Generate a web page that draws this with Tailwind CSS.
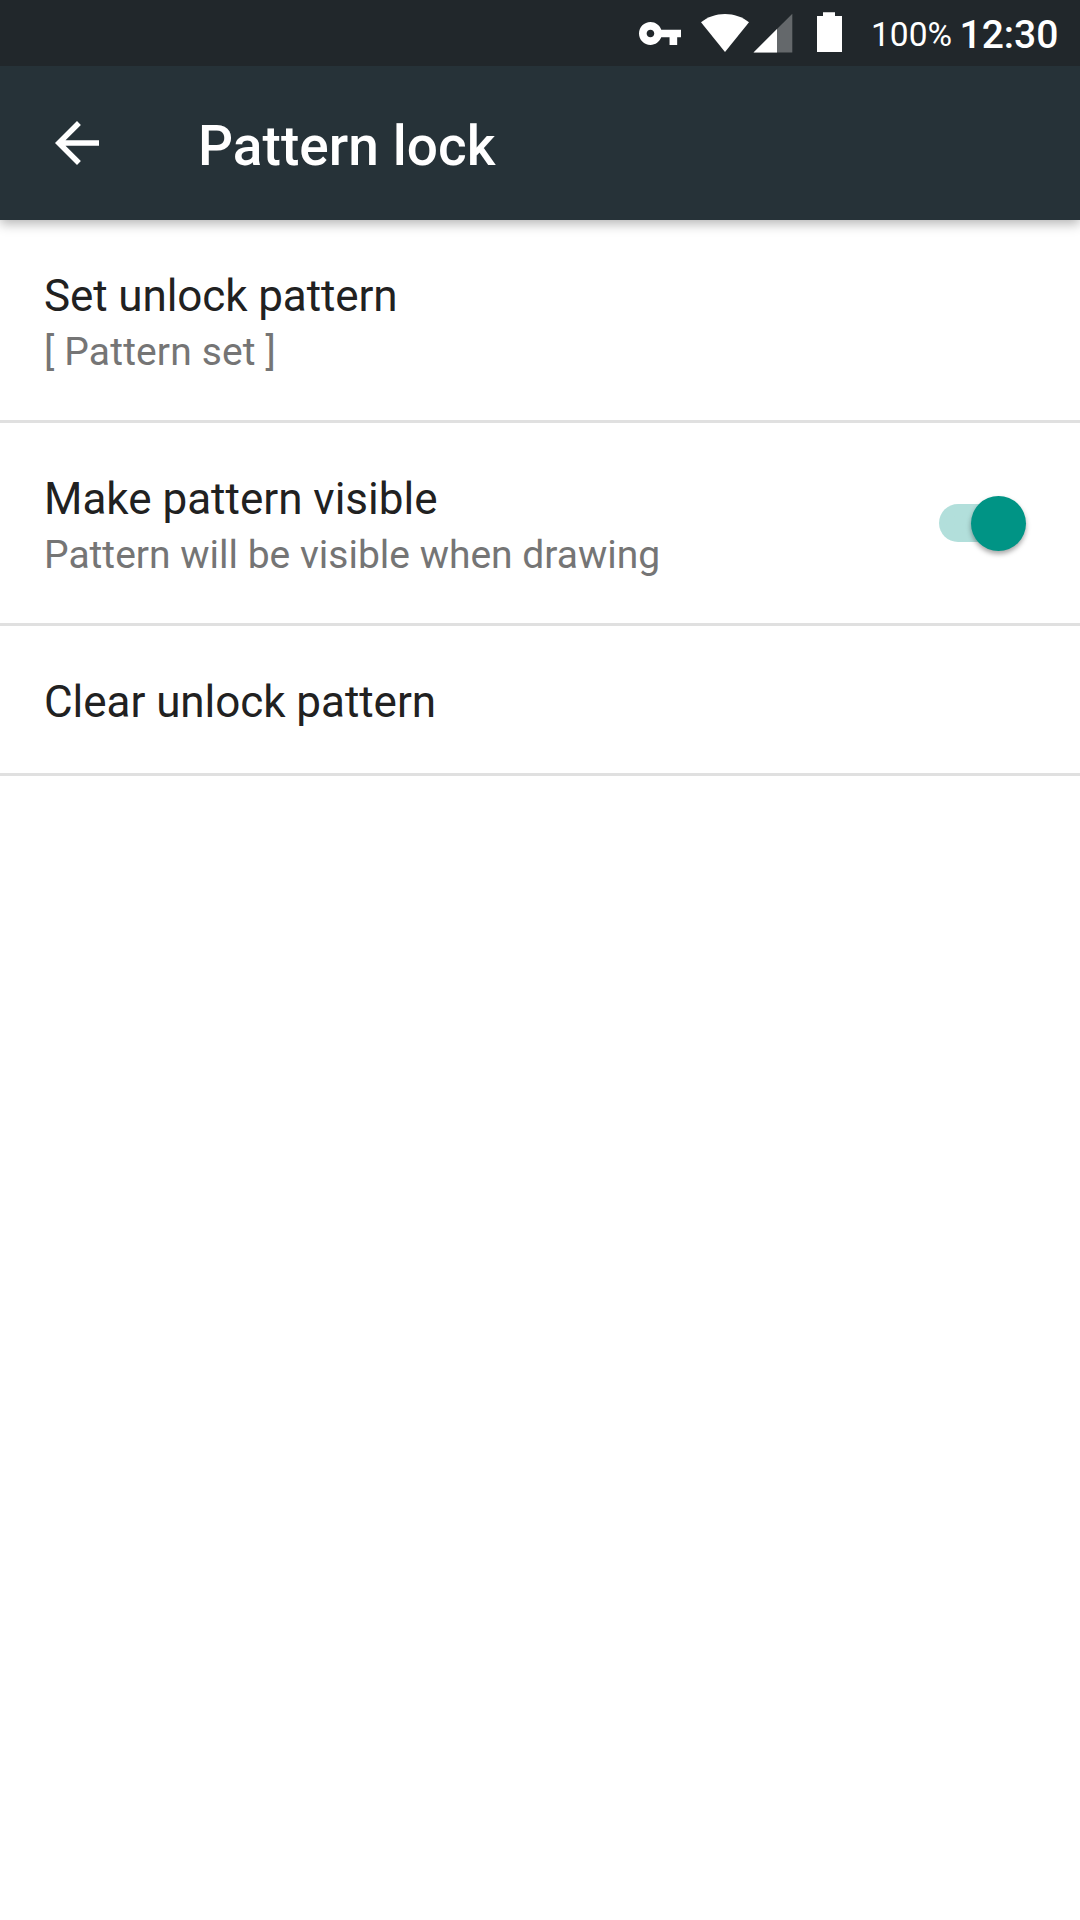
<!DOCTYPE html>
<html lang="en"><head><meta charset="utf-8"><title>Pattern lock</title>
<script src="https://cdn.jsdelivr.net/npm/@tailwindcss/browser@4"></script></head>
<body class="h-[1920px] w-[1080px] overflow-hidden bg-white font-['Roboto',sans-serif] text-[#212121]">
<header class="relative h-[220px] bg-[#263238] text-white shadow-[0_4px_11px_rgba(0,0,0,0.29)]">
<div class="flex h-[66px] items-start bg-[#21272b] pl-[639px]">
<svg class="mt-[21.5px] h-[23px] w-[42px] shrink-0" viewBox="1 6 22 12" fill="currentColor"><path d="M12.65 10C11.83 7.67 9.61 6 7 6c-3.31 0-6 2.69-6 6s2.69 6 6 6c2.61 0 4.83-1.67 5.65-4H17v4h4v-4h2v-4H12.65zM7 14c-1.1 0-2-.9-2-2s.9-2 2-2 2 .9 2 2-.9 2-2 2z"/></svg>
<svg class="mt-[13px] ml-5 h-10 w-12 shrink-0" viewBox="0 0 48 40" fill="currentColor"><path d="M24 39L0 9.3C6.500 4 15 1 24 1s17.500 3 24 8.300z"/></svg>
<svg class="mt-[13px] ml-1 h-10 w-10 shrink-0" viewBox="0 0 40 40" fill="currentColor"><path d="M.5 39.600h38.800V.7z" fill-opacity=".3"/><path d="M.5 39.600H24V16.100z"/></svg>
<svg class="mt-3 ml-6 h-10 w-[25px] shrink-0" viewBox="0 0 25 40" fill="currentColor"><path d="M6 .2h12V4h7v36H0V4h6z"/></svg>
<span class="mt-[15px] ml-[29px] w-[82px] text-[33.5px] leading-10 whitespace-nowrap">100%</span>
<span class="mt-[15px] ml-[6.5px] text-[39px] leading-10 font-medium whitespace-nowrap">12:30</span>
</div>
<div class="flex h-[154px] items-start pl-[55px]">
<svg class="mt-[55px] h-11 w-11" viewBox="4 4 16 16" fill="currentColor"><path d="M20 11H7.83l5.59-5.59L12 4l-8 8 8 8 1.41-1.41L7.83 13H20v-2z"/></svg>
<h1 class="mt-12 ml-[99px] text-[55px] leading-[64px] font-medium tracking-[0.05px]">Pattern lock</h1></div>
</header>
<main>
<section class="h-[203px] border-b-3 border-[#e0e0e0] px-[44px] pt-[50px]"><h2 class="text-[44px] leading-[52px] tracking-[-0.1px]">Set unlock pattern</h2><p class="text-[39px] leading-[60px] tracking-[0.15px] text-[#757575]">[ Pattern set ]</p></section>
<section class="flex h-[203px] justify-between border-b-3 border-[#e0e0e0] pr-[54px] pl-[44px]">
<div class="pt-[50px]"><h2 class="text-[44px] leading-[52px]">Make pattern visible</h2><p class="text-[39px] leading-[60px] text-[#757575]">Pattern will be visible when drawing</p></div>
<div role="switch" aria-checked="true" aria-label="Make pattern visible" class="mt-[81px] flex h-[38px] w-[87px] items-center justify-end rounded-full bg-linear-to-r from-[#b2dfdb] from-60% to-transparent to-60%"><span class="size-[55px] shrink-0 rounded-full bg-[#009485] shadow-[0_3px_5px_rgba(0,0,0,0.35)]"></span></div></section>
<section class="h-[150px] border-b-3 border-[#e0e0e0] px-[44px] pt-[50px]"><h2 class="text-[44px] leading-[52px] tracking-[-0.05px]">Clear unlock pattern</h2></section>
</main></body></html>
